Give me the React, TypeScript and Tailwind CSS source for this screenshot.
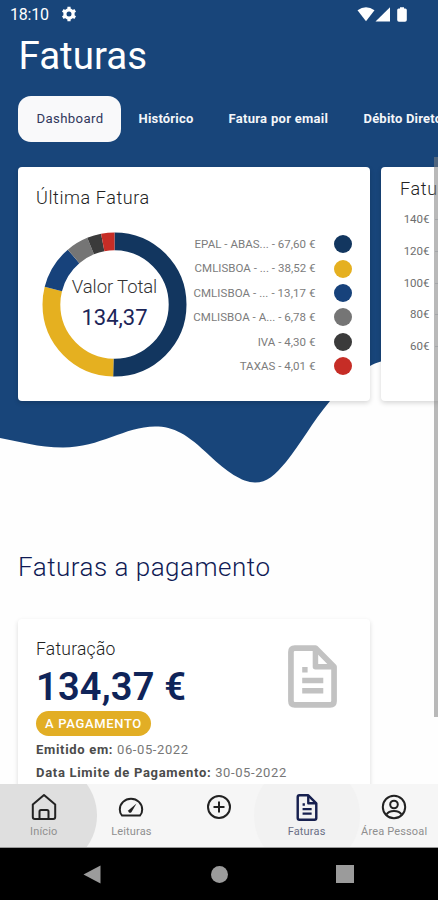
import * as React from "react";

const legend = [
  { label: "EPAL - ABAS... - 67,60 €", value: 67.6, color: "#12365f", spacing: "tracking-[0.04px]" },
  { label: "CMLISBOA - ... - 38,52 €", value: 38.52, color: "#e5b020", spacing: "tracking-[0.02px]" },
  { label: "CMLISBOA - ... - 13,17 €", value: 13.17, color: "#17427b", spacing: "tracking-[0.07px]" },
  { label: "CMLISBOA - A... - 6,78 €", value: 6.78, color: "#757575", spacing: "tracking-[0.03px]" },
  { label: "IVA - 4,30 €", value: 4.3, color: "#3b3b3b", spacing: "tracking-[0.04px]" },
  { label: "TAXAS - 4,01 €", value: 4.01, color: "#c62d26", spacing: "tracking-[0.04px]" },
];

const axis = ["140€", "120€", "100€", "80€", "60€"];

const StatusBar: React.FC = () => (
  <div className="h-7 pl-[10px] pr-[30px] flex items-center text-white">
    <span className="pt-[2px] text-[16px] tracking-[-0.2px]">18:10</span>
    <svg className="ml-[12px]" width="16" height="16" viewBox="0 0 16 16">
      <g fill="none" stroke="currentColor">
        <circle cx="8" cy="8" r="4.1" strokeWidth="3.2" />
        <path
          d="M8 0.8v2.4M8 12.8v2.4M1.8 4.4l2 1.2M12.2 10.4l2 1.2M1.8 11.6l2-1.2M12.2 5.6l2-1.2"
          strokeWidth="3.2"
        />
      </g>
    </svg>
    <svg className="ml-auto" width="51" height="17" viewBox="0 0 51 17">
      <g fill="currentColor">
        <path d="M0.5 4.3Q9 -2 17.5 4.3L9 15.3z" />
        <path d="M33 1.3v14.3H18.5z" />
        <path d="M43 1.2h4v1.3h1.3q1.5 0 1.5 1.5v10q0 1.8-1.8 1.8h-6q-1.8 0-1.8-1.8V4q0-1.5 1.5-1.5H43z" />
      </g>
    </svg>
  </div>
);

const Tabs: React.FC = () => (
  <nav className="mt-[15px] ml-[18px] h-[46px] flex items-center whitespace-nowrap text-[13px] font-bold text-[#f4f6f9]">
    <span className="w-[103px] h-[46px] pl-px pt-px shrink-0 rounded-[13px] bg-[#f9f9fa] flex items-center justify-center text-[13.2px] font-normal text-[#30375c] tracking-[0.35px]">
      Dashboard
    </span>
    <span className="ml-[17.5px] pt-px w-[90px] shrink-0 tracking-[0.2px]">Histórico</span>
    <span className="w-[135px] pt-px shrink-0 tracking-[0.3px]">Fatura por email</span>
    <span className="pt-px shrink-0 tracking-[0.2px]">Débito Direto</span>
  </nav>
);

const Donut: React.FC = () => {
  const total = legend.reduce((sum, { value }) => sum + value, 0);
  let start = 0;

  return (
    <div className="w-[145px] h-[145px] grid shrink-0">
      <svg
        className="col-start-1 row-start-1"
        width="145"
        height="145"
        viewBox="0 0 145 145"
      >
        <g fill="none" strokeWidth="17.8" transform="rotate(-90 72.5 72.5)">
          {legend.map(({ label, value, color }) => {
            const offset = start;
            start += (value / total) * 100;
            return (
              <circle
                key={label}
                cx="72.5"
                cy="72.5"
                r="63.1"
                pathLength="100"
                stroke={color}
                strokeDasharray={`${(value / total) * 100} 100`}
                strokeDashoffset={-offset}
              />
            );
          })}
        </g>
      </svg>
      <div className="col-start-1 row-start-1 flex flex-col items-center pt-[43px]">
        <span className="text-[18.5px] leading-6 font-light tracking-[-0.1px] text-[#333] whitespace-nowrap">
          Valor Total
        </span>
        <span className="mt-[5px] text-[22px] leading-7 text-[#1b2558]">
          134,37
        </span>
      </div>
    </div>
  );
};

const LastInvoice: React.FC = () => (
  <section className="w-[351.5px] h-[234.5px] shrink-0 rounded-[4px] bg-white shadow-[0_2px_5px_rgba(0,0,0,0.16)]">
    <h3 className="pt-[19.5px] pl-[18px] text-[18px] leading-6 font-light tracking-[0.58px] text-[#222]">
      Última Fatura
    </h3>
    <div className="mt-[22px] pl-[24px] pr-[18px] flex">
      <Donut />
      <ul className="flex-1">
        {legend.map(({ label, color, spacing }) => (
          <li
            key={label}
            className="h-[24.4px] flex items-center justify-end text-[11.5px] text-[#7c7c7c] whitespace-nowrap"
          >
            <span className={`pt-px ${spacing}`}>{label}</span>
            <span
              className="ml-[18px] w-[18px] h-[18px] shrink-0 rounded-full"
              style={{ backgroundColor: color }}
            />
          </li>
        ))}
      </ul>
    </div>
  </section>
);

const History: React.FC = () => (
  <section className="w-[351px] h-[234.5px] shrink-0 rounded-[4px] bg-white shadow-[0_2px_5px_rgba(0,0,0,0.16)]">
    <h3 className="pt-[10.5px] pl-[19px] text-[18px] leading-6 font-light tracking-[0.65px] text-[#222]">
      Faturas
    </h3>
    <ul className="mt-[3px] w-[70px]">
      {axis.map((value) => (
        <li
          key={value}
          className="h-[31.7px] flex items-center text-[11.5px] text-[#6e6e6e]"
        >
          <span className="w-[48.5px] text-right">{value}</span>
          <span className="ml-[5px] flex-1 h-px bg-gray-300" />
        </li>
      ))}
    </ul>
  </section>
);

const DocumentIcon: React.FC<{ className?: string }> = ({ className }) => (
  <svg className={className} viewBox="0 0 50 64" fill="none" stroke="currentColor">
    <path
      d="M7 3H28L47 22V57Q47 61 43 61H7Q3 61 3 57V7Q3 3 7 3z"
      strokeWidth="5.8"
      strokeLinejoin="round"
    />
    <path d="M28 4V22H46" strokeWidth="5.6" strokeLinejoin="round" />
    <path d="M14.5 25h5.5M14.5 36h21.5M14.5 46.5h21.5" strokeWidth="5.6" />
  </svg>
);

const PendingInvoice: React.FC = () => (
  <section className="mt-[36px] ml-[18px] w-[352px] h-[200px] rounded-[4px] bg-white shadow-[0_2px_5px_rgba(0,0,0,0.14)] pl-[18px] pr-[33.5px] pt-[18px] flex items-start justify-between text-[#4b4b4b]">
    <div className="whitespace-nowrap">
      <h3 className="text-[17.5px] leading-6 font-light tracking-[0.25px] text-[#222]">
        Faturação
      </h3>
      <p className="mt-[3px] text-[38px] leading-[46px] font-semibold tracking-[0.2px] text-[#0f2459]">
        134,37 €
      </p>
      <p className="mt-px w-[115px] h-[25px] pt-px rounded-full bg-[#e2ae25] flex items-center justify-center text-[13px] font-medium tracking-[0.65px] text-white">
        A PAGAMENTO
      </p>
      <p className="mt-[3px] text-[13px] leading-[22.5px] tracking-[0.6px] text-[#777]">
        <strong className="font-bold tracking-[0.68px] text-[#4b4b4b]">
          Emitido em:
        </strong>{" "}
        06-05-2022
      </p>
      <p className="text-[13px] leading-[22.5px] tracking-[0.6px] text-[#777]">
        <strong className="font-bold tracking-[0.7px] text-[#4b4b4b]">
          Data Limite de Pagamento:
        </strong>{" "}
        30-05-2022
      </p>
    </div>
    <DocumentIcon className="mt-[8px] w-[49px] h-[63px] shrink-0 text-[#c2c2c2]" />
  </section>
);

const HomeIcon: React.FC = () => (
  <svg width="26" height="28" viewBox="0 0 26 28" fill="none" stroke="currentColor" strokeWidth="2" strokeLinejoin="round">
    <path d="M1.8 11.5L13 2l11.2 9.5V24q0 2-2 2H3.8q-2 0-2-2z" />
    <path d="M8.5 26v-7.5q0-1.5 1.5-1.5h6q1.5 0 1.5 1.5V26" />
  </svg>
);

const GaugeIcon: React.FC = () => (
  <svg width="26" height="28" viewBox="0 0 26 28" fill="none" stroke="currentColor" strokeWidth="2">
    <path d="M4 22.5Q1.8 20.5 1.8 16.5A11.2 10.8 0 0 1 24.2 16.5Q24.2 20.5 22 22.5z" strokeLinejoin="round" />
    <path d="M10.5 17.2L18.5 10.5L13.4 19.3Q12 20.3 10.8 19.3Q9.8 18.2 10.5 17.2z" fill="currentColor" stroke="none" />
  </svg>
);

const AddIcon: React.FC = () => (
  <svg width="26" height="28" viewBox="0 0 26 28" fill="none" stroke="currentColor" strokeWidth="2">
    <circle cx="13" cy="14" r="11" />
    <path d="M13 8.5v11M7.5 14h11" />
  </svg>
);

const PersonIcon: React.FC = () => (
  <svg width="26" height="28" viewBox="0 0 26 28" fill="none" stroke="currentColor" strokeWidth="2">
    <circle cx="13" cy="14" r="11.2" />
    <circle cx="13" cy="11.5" r="3.8" />
    <path d="M5.5 21.5Q7.5 18 13 18T20.5 21.5" />
  </svg>
);

const NavItem: React.FC<{
  label?: string;
  className?: string;
  children: React.ReactNode;
}> = ({ label, className = "", children }) => (
  <div
    className={`flex-1 flex flex-col items-center pt-[9px] whitespace-nowrap ${className}`}
  >
    <span className="h-7 flex items-center text-[#222]">{children}</span>
    <span className="mt-[3px] text-[11px] leading-4 tracking-[0.15px]">{label}</span>
  </div>
);

const BottomNav: React.FC = () => (
  <nav className="relative h-16 shrink-0 overflow-hidden bg-[#f6f6f6] border-b border-[#999] flex text-[#8f8f8f]">
    {/* touch ripples */}
    <span className="absolute -left-[10px] -top-[22px] w-[107px] h-[107px] rounded-full bg-[#dfdfdf]" />
    <span className="absolute left-0 top-0 w-[44px] h-16 bg-[#dfdfdf]" />
    <span className="absolute left-[254px] -top-[22px] w-[106px] h-[107px] rounded-full bg-[#f2f2f2]" />
    <div className="relative flex-1 flex">
      <NavItem label="Início">
        <HomeIcon />
      </NavItem>
      <NavItem label="Leituras">
        <GaugeIcon />
      </NavItem>
      <NavItem>
        <AddIcon />
      </NavItem>
      <NavItem label="Faturas" className="text-[#6a6f86]">
        <DocumentIcon className="w-[22px] h-[27px] text-[#17204f]" />
      </NavItem>
      <NavItem label="Área Pessoal">
        <PersonIcon />
      </NavItem>
    </div>
  </nav>
);

const SystemBar: React.FC = () => (
  <div className="h-[52px] shrink-0 bg-black pl-[83px] pr-[84px] flex items-center justify-between text-[#9b9b9b]">
    <svg width="18" height="19" viewBox="0 0 18 19" fill="currentColor">
      <path d="M0.5 9.5L17.5 0.5v18z" />
    </svg>
    <span className="w-[17px] h-[17px] ml-px rounded-full bg-current" />
    <span className="w-[18px] h-[18px] bg-current" />
  </div>
);

const App: React.FC = () => (
  <div className="w-[438px] h-[900px] flex flex-col overflow-hidden bg-white font-['Roboto','Liberation_Sans',sans-serif]">
    <main className="relative flex-1 min-h-0 overflow-hidden bg-[#fefefe]">
      <svg
        className="absolute left-0 top-0"
        width="438"
        height="490"
        viewBox="0 0 438 490"
      >
        <path
          d="M0 0H438V356C405 356 382 359 370 366C355 375 342 388 330 401C313 421 300 445 286 462C275 475 267 482.5 255 482.5C242 482.5 226 471 210 456C187 434 174 426.5 155 426.5C125 426.5 100 447.5 63 447.5C38 447.5 20 441.5 0 438z"
          fill="#18457a"
        />
      </svg>
      <div className="relative">
        <StatusBar />
        <h1 className="mt-[4px] mb-[15.5px] pl-[18.5px] text-[38.5px] leading-[48px] text-white">
          Faturas
        </h1>
        <Tabs />
        <div className="mt-[25px] pl-[18px] flex gap-[11.5px]">
          <LastInvoice />
          <History />
        </div>
        <h2 className="mt-[150px] pl-[18px] text-[26px] leading-8 font-light tracking-[0.5px] text-[#101b55]">
          Faturas a pagamento
        </h2>
        <PendingInvoice />
      </div>
      <div className="absolute right-0 top-[157px] w-[4px] h-[560px] bg-[#7f7f7f]/55" />
    </main>
    <BottomNav />
    <SystemBar />
  </div>
);

export default App;
